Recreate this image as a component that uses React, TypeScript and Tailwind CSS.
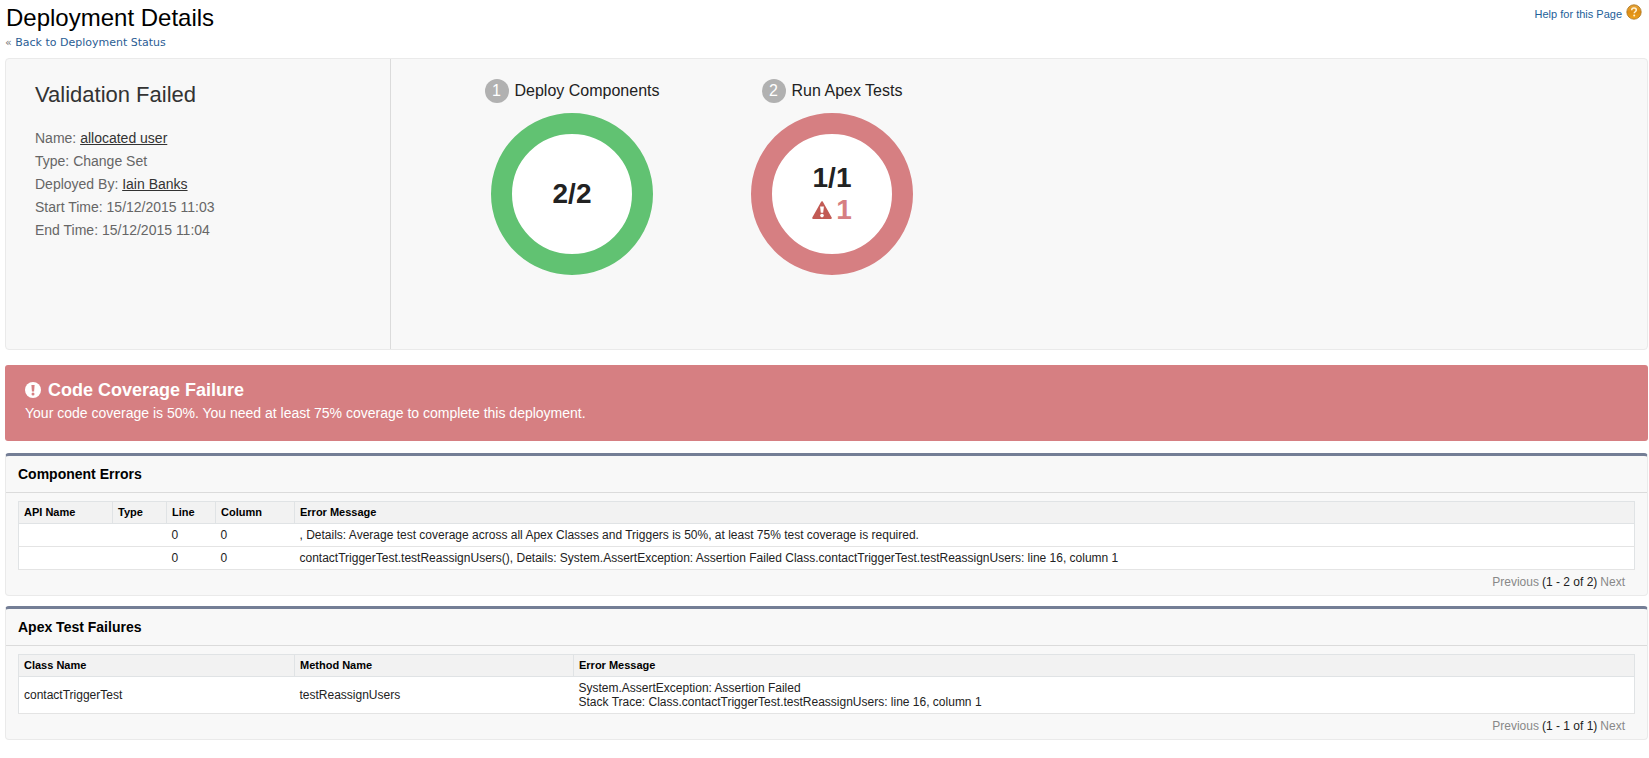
import type { ReactNode } from 'react';

interface Column {
  label: string;
  width: string;
}

interface RelatedListProps {
  title: string;
  columns: Column[];
  rows: ReactNode[][];
  range: string;
}

interface StageProps {
  step: number;
  label: string;
  ring: string;
  children: ReactNode;
}

const componentColumns: Column[] = [
  { label: 'API Name', width: 'w-[94px]' },
  { label: 'Type', width: 'w-[54px]' },
  { label: 'Line', width: 'w-[49px]' },
  { label: 'Column', width: 'w-[79px]' },
  { label: 'Error Message', width: 'w-auto' },
];

const componentRows = [
  ['', '', '0', '0', ', Details: Average test coverage across all Apex Classes and Triggers is 50%, at least 75% test coverage is required.'],
  ['', '', '0', '0', 'contactTriggerTest.testReassignUsers(), Details: System.AssertException: Assertion Failed Class.contactTriggerTest.testReassignUsers: line 16, column 1'],
];

const testColumns: Column[] = [
  { label: 'Class Name', width: 'w-[276px]' },
  { label: 'Method Name', width: 'w-[279px]' },
  { label: 'Error Message', width: 'w-auto' },
];

const testRows: ReactNode[][] = [
  [
    'contactTriggerTest',
    'testReassignUsers',
    <>
      System.AssertException: Assertion Failed
      <br />
      Stack Trace: Class.contactTriggerTest.testReassignUsers: line 16, column 1
    </>,
  ],
];

const HelpIcon = () => (
  <svg className="w-4 h-4" viewBox="0 0 16 16" aria-hidden="true">
    <defs>
      <linearGradient id="help" x1="0" y1="0" x2="0" y2="1">
        <stop offset="0" stopColor="#e9a63a" />
        <stop offset="0.5" stopColor="#dd8d14" />
        <stop offset="1" stopColor="#f0a21c" />
      </linearGradient>
    </defs>
    <circle cx="8" cy="8" r="7.2" fill="url(#help)" stroke="#a8741f" strokeWidth="0.8" />
    <path d="M5.7 6.3c0-1.4 1-2.2 2.3-2.2s2.3.8 2.3 2c0 1.6-2.1 1.7-2.1 3.2" fill="none" stroke="#fff4d6" strokeWidth="1.5" />
    <circle cx="8.2" cy="11.5" r="1" fill="#fff4d6" />
  </svg>
);

const WarningIcon = () => (
  <svg className="w-5 h-[18px]" viewBox="0 0 20 18" aria-hidden="true">
    <path d="M10 1.2 18.8 17H1.2Z" fill="#c25b55" stroke="#c25b55" strokeWidth="2" strokeLinejoin="round" />
    <path d="M8.1 5.5h3.8l-.7 6.2H8.8Z" fill="#fff" />
    <circle cx="10" cy="14.6" r="1.8" fill="#fff" />
  </svg>
);

const AlertIcon = () => (
  <svg className="w-4 h-4" viewBox="0 0 16 16" aria-hidden="true">
    <circle cx="8" cy="8" r="8" fill="#fff" />
    <path d="M6.4 3h3.2l-.5 6.4H6.9Z" fill="#d67f82" />
    <circle cx="8" cy="12" r="1.5" fill="#d67f82" />
  </svg>
);

const Stage = ({ step, label, ring, children }: StageProps) => (
  <div className="w-[260px] flex flex-col items-center">
    <h3 className="flex items-center gap-[6px] h-6 text-[16px] text-[#222]">
      <span className="w-6 h-6 rounded-full bg-[#b1b1b1] text-white text-center leading-6">{step}</span>
      {label}
    </h3>
    <div className={`mt-[10px] w-[162px] h-[162px] rounded-full border-[21px] bg-white flex flex-col items-center justify-center text-[28px] leading-8 font-bold text-[#222] ${ring}`}>
      {children}
    </div>
  </div>
);

const RelatedList = ({ title, columns, rows, range }: RelatedListProps) => (
  <section className="border border-t-[3px] border-[#eaeaea] border-t-[#747e96] rounded-[4px] bg-[#f8f8f8]">
    <h2 className="h-[37px] pl-3 border-b border-[#dbdbdb] text-[14px] leading-9 font-bold text-black">{title}</h2>
    <div className="px-3 pt-2">
      <table className="w-full table-fixed border-collapse border border-[#e0e3e5] bg-white text-left">
        <thead>
          <tr className="h-[22px] bg-[#f2f2f2] text-[11px] font-bold text-black">
            {columns.map(column => (
              <th key={column.label} className={`${column.width} px-[5px] border border-[#e0e3e5]`}>
                {column.label}
              </th>
            ))}
          </tr>
        </thead>
        <tbody>
          {rows.map((row, i) => (
            <tr key={i} className="border-b border-[#e4e4e4] text-[12px] leading-[14px] text-[#222]">
              {row.map((cell, j) => (
                <td key={j} className="h-[23px] px-[5px] py-1">{cell}</td>
              ))}
            </tr>
          ))}
        </tbody>
      </table>
      <div className="h-[25px] pr-[10px] flex justify-end gap-[3px] text-[12px] leading-6 text-[#888]">
        <span>Previous</span>
        <span className="text-[#222]">{range}</span>
        <span>Next</span>
      </div>
    </div>
  </section>
);

export default function App() {
  return (
    <main className="pl-[5px] pr-px pb-4 bg-white font-['Liberation_Sans',Arial,sans-serif]">
      <header className="flex justify-between">
        <div>
          <h1 className="pt-1 pl-px text-[24px] leading-7 text-black">Deployment Details</h1>
          <p className="pt-1 font-['DejaVu_Sans',Verdana,sans-serif] text-[11px] leading-[14px] text-[#777]">
            «{' '}
            <a href="#status" className="text-[#2a5d94]">Back to Deployment Status</a>
          </p>
        </div>
        <a href="#help" className="h-6 pr-[6px] flex items-center gap-1 text-[11px] text-[#236099]">
          <span className="pt-1">Help for this Page</span>
          <HelpIcon />
        </a>
      </header>

      <section className="mt-2 flex min-h-[292px] border border-[#eaeaea] rounded-[4px] bg-[#f8f8f8]">
        <div className="w-[385px] shrink-0 pl-[29px] pt-5 border-r border-[#dbdbdb]">
          <h2 className="text-[22px] leading-8 text-[#333]">Validation Failed</h2>
          <div className="mt-4 text-[14px] leading-[23px] text-[#666]">
            <p>Name: <a href="#change-set" className="text-[#333] underline">allocated user</a></p>
            <p>Type: Change Set</p>
            <p>Deployed By: <a href="#user" className="text-[#333] underline">Iain Banks</a></p>
            <p>Start Time: 15/12/2015 11:03</p>
            <p>End Time: 15/12/2015 11:04</p>
          </div>
        </div>
        <div className="flex pl-[51px] pt-5">
          <Stage step={1} label="Deploy Components" ring="border-[#61c272]">
            <span>2/2</span>
          </Stage>
          <Stage step={2} label="Run Apex Tests" ring="border-[#d67f82]">
            <span>1/1</span>
            <span className="flex items-center gap-1 text-[#d67f82]">
              <WarningIcon />
              1
            </span>
          </Stage>
        </div>
      </section>

      <section className="mt-[15px] min-h-[76px] px-5 pt-[14px] rounded-[3px] bg-[#d67f82] text-white">
        <h2 className="flex items-center gap-[7px] text-[18px] leading-[22px] font-bold">
          <AlertIcon />
          Code Coverage Failure
        </h2>
        <p className="text-[14px] leading-6">Your code coverage is 50%. You need at least 75% coverage to complete this deployment.</p>
      </section>

      <div className="mt-3 flex flex-col gap-[10px]">
        <RelatedList title="Component Errors" columns={componentColumns} rows={componentRows} range="(1 - 2 of 2)" />
        <RelatedList title="Apex Test Failures" columns={testColumns} rows={testRows} range="(1 - 1 of 1)" />
      </div>
    </main>
  );
}
